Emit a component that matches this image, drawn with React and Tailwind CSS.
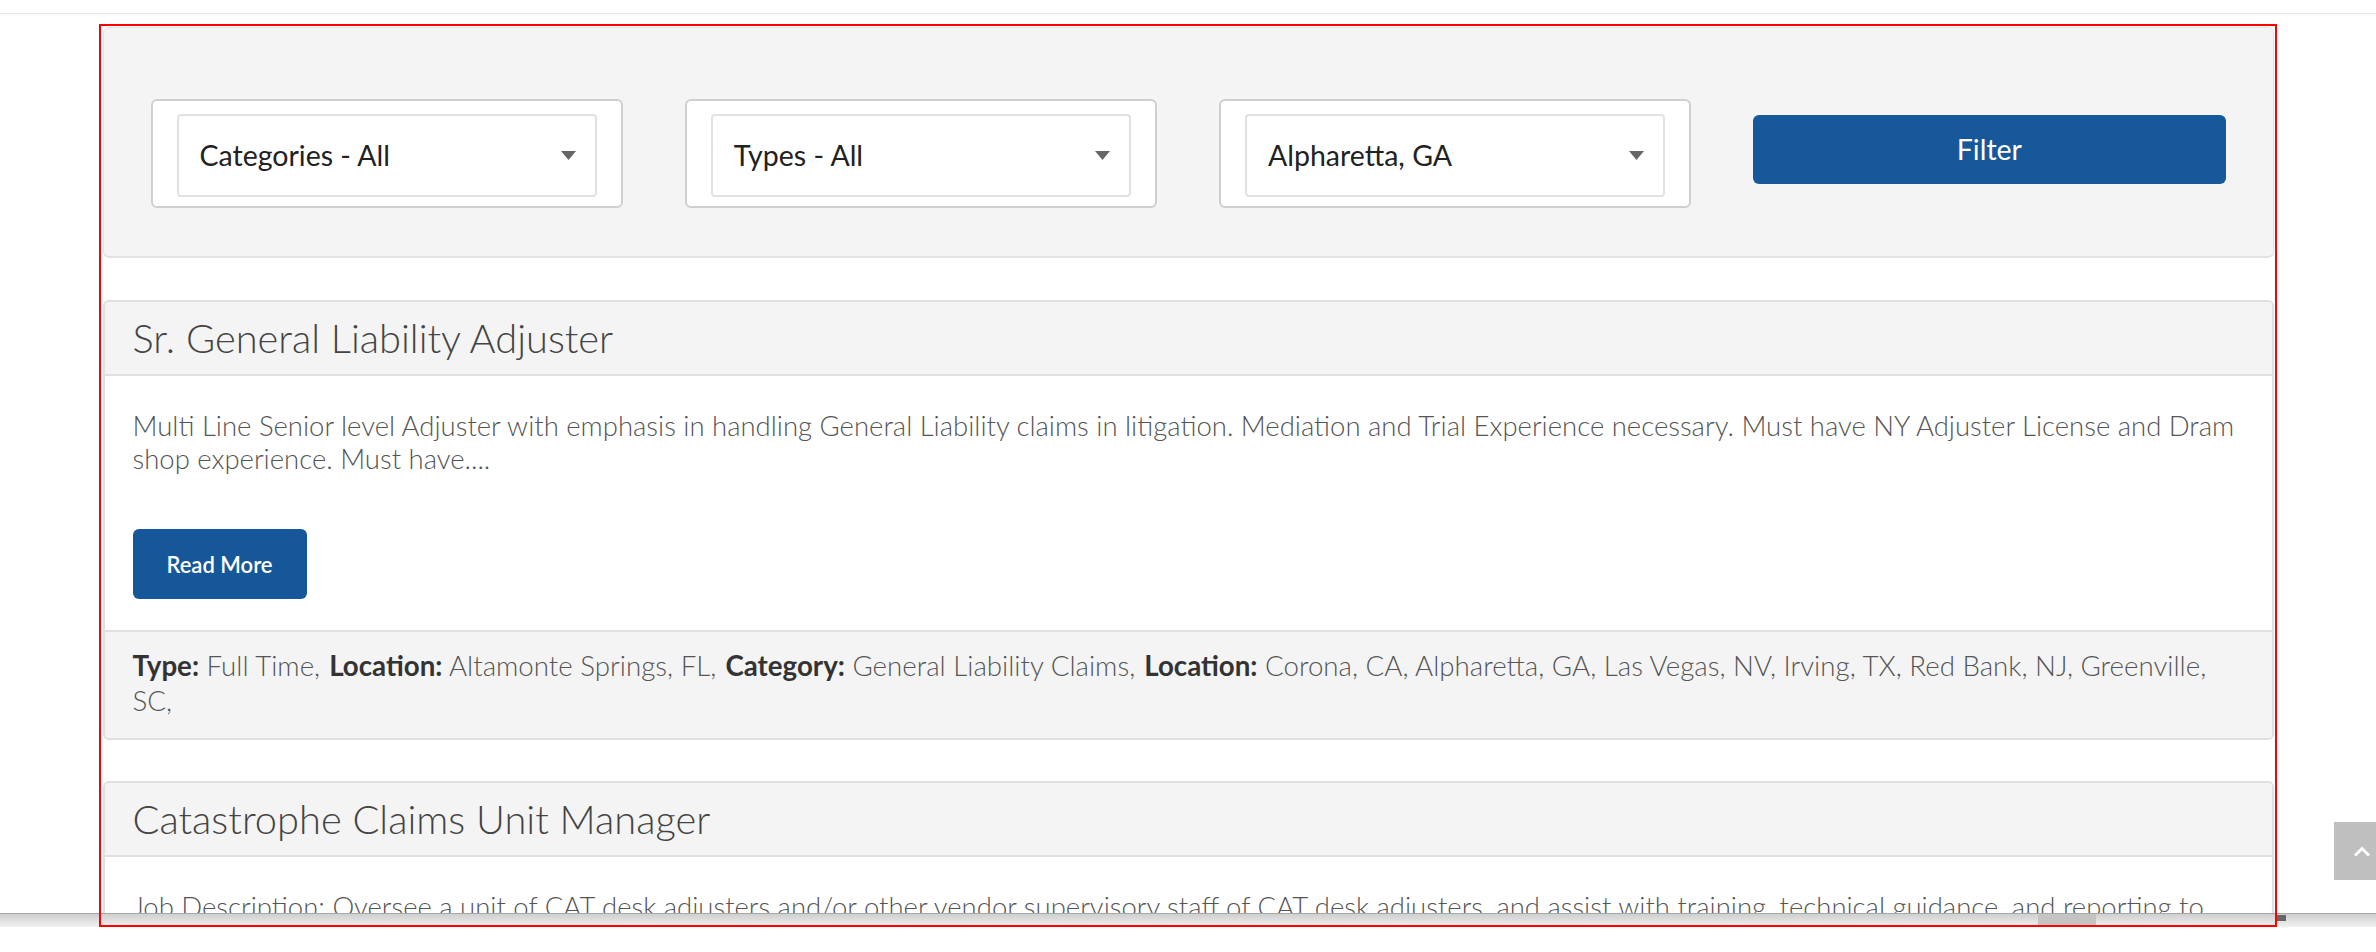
const filters = ["Categories - All", "Types - All", "Alpharetta, GA"];

const jobs = [
  {
    title: "Sr. General Liability Adjuster",
    description:
      "Multi Line Senior level Adjuster with emphasis in handling General Liability claims in litigation. Mediation and Trial Experience necessary. Must have NY Adjuster License and Dram shop experience. Must have....",
    meta: [
      ["Type:", "Full Time,"],
      ["Location:", "Altamonte Springs, FL,"],
      ["Category:", "General Liability Claims,"],
      [
        "Location:",
        "Corona, CA, Alpharetta, GA, Las Vegas, NV, Irving, TX, Red Bank, NJ, Greenville, SC,",
      ],
    ],
  },
  {
    title: "Catastrophe Claims Unit Manager",
    description:
      "Job Description: Oversee a unit of CAT desk adjusters and/or other vendor supervisory staff of CAT desk adjusters, and assist with training, technical guidance, and reporting to management on claim activity. Ensure that claim files are up to date.",
    meta: [],
  },
];

function FilterSelect({ label }) {
  return (
    <div className="rounded-[6px] border-2 border-[#cfcfcf] bg-white px-[24px] pt-[13px] pb-[9px]">
      <div className="flex h-[83px] items-center justify-between rounded-[4px] border-2 border-[#e2e2e2] pl-[21px] pr-[19px]">
        <span className="text-[28.5px] text-[#222]">{label}</span>
        <svg width="15" height="9" viewBox="0 0 15 9">
          <path d="M0 0h15L7.5 9z" fill="#666" />
        </svg>
      </div>
    </div>
  );
}

function JobCard({ job, first }) {
  return (
    <div
      className={
        (first ? "mt-[42px]" : "mt-[41px]") +
        " overflow-hidden rounded-[6px] border-2 border-[#e0e0e0] bg-white"
      }
    >
      {/* header */}
      <div className="flex h-[74px] items-center border-b-2 border-[#e0e0e0] bg-[#f4f4f4] px-[28px]">
        <h2 className="text-[39.8px] font-light text-[#444]">{job.title}</h2>
      </div>

      {/* body */}
      <div className="px-[28px] pt-[33px] pb-[31px]">
        <p className="text-[27.5px] leading-[33px] font-light text-[#555]">
          {job.description}
        </p>
        <button className="mt-[54px] h-[70px] w-[174px] rounded-[6px] bg-[#16579a] text-[22px] font-semibold text-white">
          Read More
        </button>
      </div>

      {/* meta */}
      {job.meta.length > 0 && (
        <div className="border-t-2 border-[#e0e0e0] bg-[#f4f4f4] px-[28px] pt-[16px] pb-[20px]">
          <p className="text-[27.7px] leading-[35px] font-light text-[#555]">
            {job.meta.map(([label, value], i) => (
              <span key={i} className="mr-[9px]">
                <b className="font-bold text-[#333]">{label}</b> {value}
              </span>
            ))}
          </p>
        </div>
      )}
    </div>
  );
}

export default function App() {
  return (
    <div className="relative h-[952px] overflow-hidden bg-white font-['Lato','Open_Sans',sans-serif]">
      {/* top rule */}
      <div className="h-[14px] border-b border-[#e6e6e6] shadow-[0_1px_3px_rgba(0,0,0,0.04)]" />

      {/* page content, clipped by the bottom bar */}
      <div className="h-[899px] overflow-hidden">
        <div className="mx-auto w-[2171px] pt-[13px]">
          {/* filter panel */}
          <div className="rounded-[6px] border border-b-2 border-[#e3e3e3] bg-[#f4f4f4] px-[47px] pt-[71px] pb-[48px]">
            <div className="grid grid-cols-4 gap-x-[62px]">
              {filters.map((f) => (
                <FilterSelect key={f} label={f} />
              ))}
              <button className="mt-[16px] h-[69px] rounded-[6px] bg-[#17589a] text-[28.5px] text-white">
                Filter
              </button>
            </div>
          </div>

          {jobs.map((job, i) => (
            <JobCard key={job.title} job={job} first={i === 0} />
          ))}
        </div>
      </div>

      {/* bottom bar */}
      <div className="relative h-[14px] border-t border-[#a8a8a8] bg-gradient-to-b from-[#cfcfcf] to-[#f1f1f1]">
        <div className="absolute top-0 left-[2038px] h-full w-[58px] bg-[#c4c4c4]" />
        <div className="absolute top-[1px] left-[2277px] h-[6px] w-[9px] bg-[#666]" />
      </div>

      {/* annotation frame */}
      <div className="pointer-events-none absolute top-[24px] left-[99px] h-[903px] w-[2178px] border-2 border-[#ff0000]" />

      {/* scroll to top */}
      <div className="absolute top-[822px] right-0 flex h-[58px] w-[42px] items-center justify-center bg-[#bfbfbf] pl-[14px]">
        <svg width="18" height="11" viewBox="0 0 18 11">
          <path d="M2 9.5L9 2.5l7 7" fill="none" stroke="#fff" strokeWidth="3" />
        </svg>
      </div>
    </div>
  );
}
